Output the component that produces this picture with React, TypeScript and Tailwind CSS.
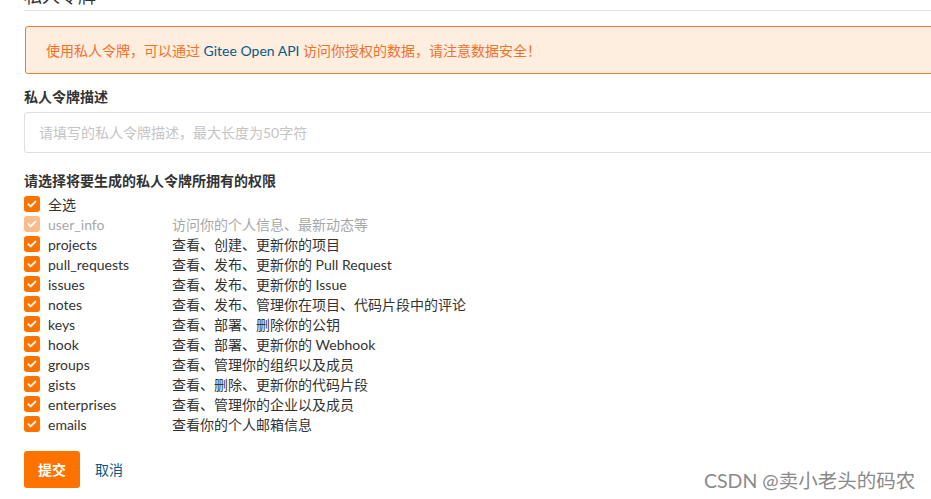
const perms: [string, string][] = [
  ["user_info", "访问你的个人信息、最新动态等"],
  ["projects", "查看、创建、更新你的项目"],
  ["pull_requests", "查看、发布、更新你的 Pull Request"],
  ["issues", "查看、发布、更新你的 Issue"],
  ["notes", "查看、发布、管理你在项目、代码片段中的评论"],
  ["keys", "查看、部署、删除你的公钥"],
  ["hook", "查看、部署、更新你的 Webhook"],
  ["groups", "查看、管理你的组织以及成员"],
  ["gists", "查看、删除、更新你的代码片段"],
  ["enterprises", "查看、管理你的企业以及成员"],
  ["emails", "查看你的个人邮箱信息"],
];

function Check({ disabled }: { disabled?: boolean }) {
  return (
    <span
      className={
        "flex h-4 w-4 shrink-0 items-center justify-center rounded-[3px] " +
        (disabled ? "bg-[#fdbb8a]" : "bg-[#fe7300]")
      }
    >
      <svg viewBox="0 0 16 16" className="h-3 w-3" fill="none">
        <path d="M3.2 8.3l3 3 6.4-6.6" stroke="white" strokeWidth="2.4" strokeLinecap="round" strokeLinejoin="round" />
      </svg>
    </span>
  );
}

export default function App() {
  return (
    <main
      className="relative h-[499px] w-[931px] overflow-hidden bg-white text-[14px] text-[#333]"
      style={{ fontFamily: 'Lato, "Noto Sans CJK SC", sans-serif' }}
    >
      <div className="w-[960px] pl-[24px]">
        {/* header */}
        <div className="mt-[-16px] border-b border-[#e3e3e3] pb-[2px] text-[18px] leading-[24px] text-[#333]">私人令牌</div>

        {/* alert */}
        <div className="mt-[15px] ml-px flex h-[48px] items-center rounded-[3px] border border-[#f57c2e] bg-[#fdeee0] pl-[20px] text-[#f4702b]">
          使用私人令牌，可以通过&nbsp;<span className="text-[#0b5984]">Gitee Open API</span>&nbsp;访问你授权的数据，请注意数据安全！
        </div>

        {/* description */}
        <div className="mt-[14px] font-bold leading-[18px]">私人令牌描述</div>
        <div className="mt-[6px] flex h-[41px] items-center rounded-[3px] border border-[#dedde8] pl-[14px] text-[#c4c4c4]">
          请填写的私人令牌描述，最大长度为50字符
        </div>

        {/* permissions */}
        <div className="mt-[19px] font-bold leading-[18px]">请选择将要生成的私人令牌所拥有的权限</div>
        <div className="mt-[4px] flex flex-col">
          <label className="flex h-[20px] items-center gap-[8px]">
            <Check />
            <span>全选</span>
          </label>
          {perms.map(([name, desc], i) => (
            <label key={name} className={"flex h-[20px] items-center " + (i === 0 ? "text-[#a8a8a8]" : "")}>
              <Check disabled={i === 0} />
              <span className="ml-[8px] w-[124px]">{name}</span>
              <span>{desc}</span>
            </label>
          ))}
        </div>

        {/* actions */}
        <div className="mt-[17px] flex items-center gap-[15px]">
          <button className="h-[37px] w-[56px] rounded-[3px] bg-[#fe7300] font-bold text-white">提交</button>
          <span className="text-[#0b5984]">取消</span>
        </div>
      </div>

      <div className="absolute left-[704px] top-[466px] text-[19.5px] text-[#8a8a8a]">CSDN @卖小老头的码农</div>
    </main>
  );
}
